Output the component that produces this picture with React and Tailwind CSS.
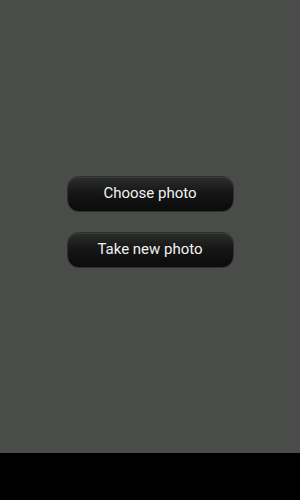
import React from 'react';

function PhotoButton({ label }) {
  return (
    <button
      className="w-[167px] h-[36px] rounded-[12px] border border-[#2e302e] bg-gradient-to-b from-[#2c2e2c] via-[#141514] to-[#0a0b0a] text-[#f2f2f2] text-[15px] leading-none pb-[1px] shadow-[inset_0_1px_0_rgba(255,255,255,0.08)]"
      style={{ fontFamily: 'Roboto, "Open Sans", sans-serif' }}
    >
      {label}
    </button>
  );
}

export default function App() {
  return (
    <div className="w-[300px] h-[500px] flex flex-col bg-black">
      <div className="h-[453px] bg-[#4a4c4a] flex flex-col items-center pt-[176px] gap-[20px]">
        <PhotoButton label="Choose photo" />
        <PhotoButton label="Take new photo" />
      </div>
      <div className="flex-1 bg-black"></div>
    </div>
  );
}
